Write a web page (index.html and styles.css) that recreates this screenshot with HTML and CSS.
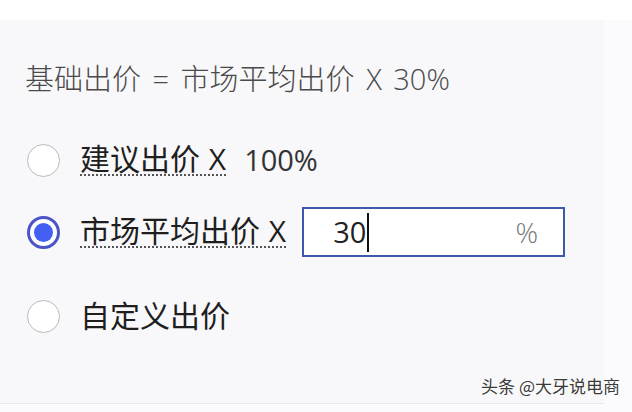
FILE: index.html
```html
<!DOCTYPE html>
<html lang="zh-CN">
<head>
<meta charset="utf-8">
<link rel="stylesheet" href="styles.css">
</head>
<body>
<div class="top"></div>
<div class="panel">
  <div class="formula">基础出价 = 市场平均出价 X 30%</div>
  <div class="row row-first">
    <span class="radio"></span>
    <span class="label dotted">建议出价 X</span>
    <span class="value">100%</span>
  </div>
  <div class="row">
    <span class="radio checked"><span class="dot"></span></span>
    <span class="label dotted">市场平均出价 X</span>
    <div class="input">
      <span class="num">30</span><span class="caret"></span>
      <span class="unit">%</span>
    </div>
  </div>
  <div class="row">
    <span class="radio"></span>
    <span class="label">自定义出价</span>
  </div>
  <div class="footer">
    <span class="watermark">头条 @大牙说电商</span>
  </div>
</div>
<div class="bottom"></div>
</body>
</html>
```
FILE: styles.css
```css
html, body {
  margin: 0;
  padding: 0;
  background: #fbfafc;
  width: 632px;
  height: 412px;
  overflow: hidden;
  font-family: "Open Sans", "Noto Sans CJK SC", sans-serif;
}
.top {
  height: 20px;
  background: #ffffff;
}
.panel {
  width: 604px;
  height: 383px;
  background: #f8f7f9;
  border-bottom: 1px solid #e9e7eb;
  display: flex;
  flex-direction: column;
}
.formula {
  margin-top: 39px;
  padding-left: 25px;
  height: 40px;
  line-height: 40px;
  font-size: 29px;
  font-weight: 300;
  color: #4a4a4a;
  white-space: nowrap;
  word-spacing: 4px;
}
.row {
  display: flex;
  align-items: center;
  height: 84px;
  padding-left: 27px;
}
.row-first {
  margin-top: 31px;
  height: 60px;
}
.radio {
  width: 31px;
  height: 31px;
  border: 1px solid #b9b9bc;
  border-radius: 50%;
  background: #ffffff;
  flex: none;
  display: flex;
  align-items: center;
  justify-content: center;
  box-sizing: content-box;
}
.radio.checked {
  width: 27px;
  height: 27px;
  border: 3px solid #4b55c9;
}
.dot {
  width: 19px;
  height: 19px;
  border-radius: 50%;
  background: #4360f2;
}
.label {
  margin-left: 20px;
  font-size: 30px;
  line-height: 32px;
  color: #1e1e1e;
  white-space: nowrap;
  word-spacing: 1px;
}
.dotted {
  border-bottom: 2px dotted #555;
  line-height: 30px;
}
.value {
  margin-left: 18px;
  font-size: 29px;
  color: #333;
  line-height: 32px;
}
.input {
  margin-left: 16px;
  border: 2px solid #3c5aa6;
  background: #ffffff;
  display: flex;
  align-items: center;
  padding-left: 29px;
  box-sizing: border-box;
  width: 263px;
  height: 50px;
}
.num {
  font-size: 29px;
  color: #222;
  line-height: 32px;
}
.caret {
  width: 2px;
  height: 39px;
  background: #111;
  margin-left: 1px;
}
.unit {
  margin-left: auto;
  margin-right: 25px;
  font-size: 28px;
  font-weight: 300;
  color: #777;
}
.footer {
  flex: 1;
  display: flex;
  justify-content: flex-end;
  align-items: flex-start;
  padding-top: 15px;
  margin-right: -16px;
}
.watermark {
  font-family: "Noto Sans CJK SC", sans-serif;
  font-size: 17px;
  color: #3a3a3a;
  text-shadow: 0 0 2px #fff, 0 0 1px #fff;
  white-space: nowrap;
}
.bottom {
  height: 8px;
}
```
